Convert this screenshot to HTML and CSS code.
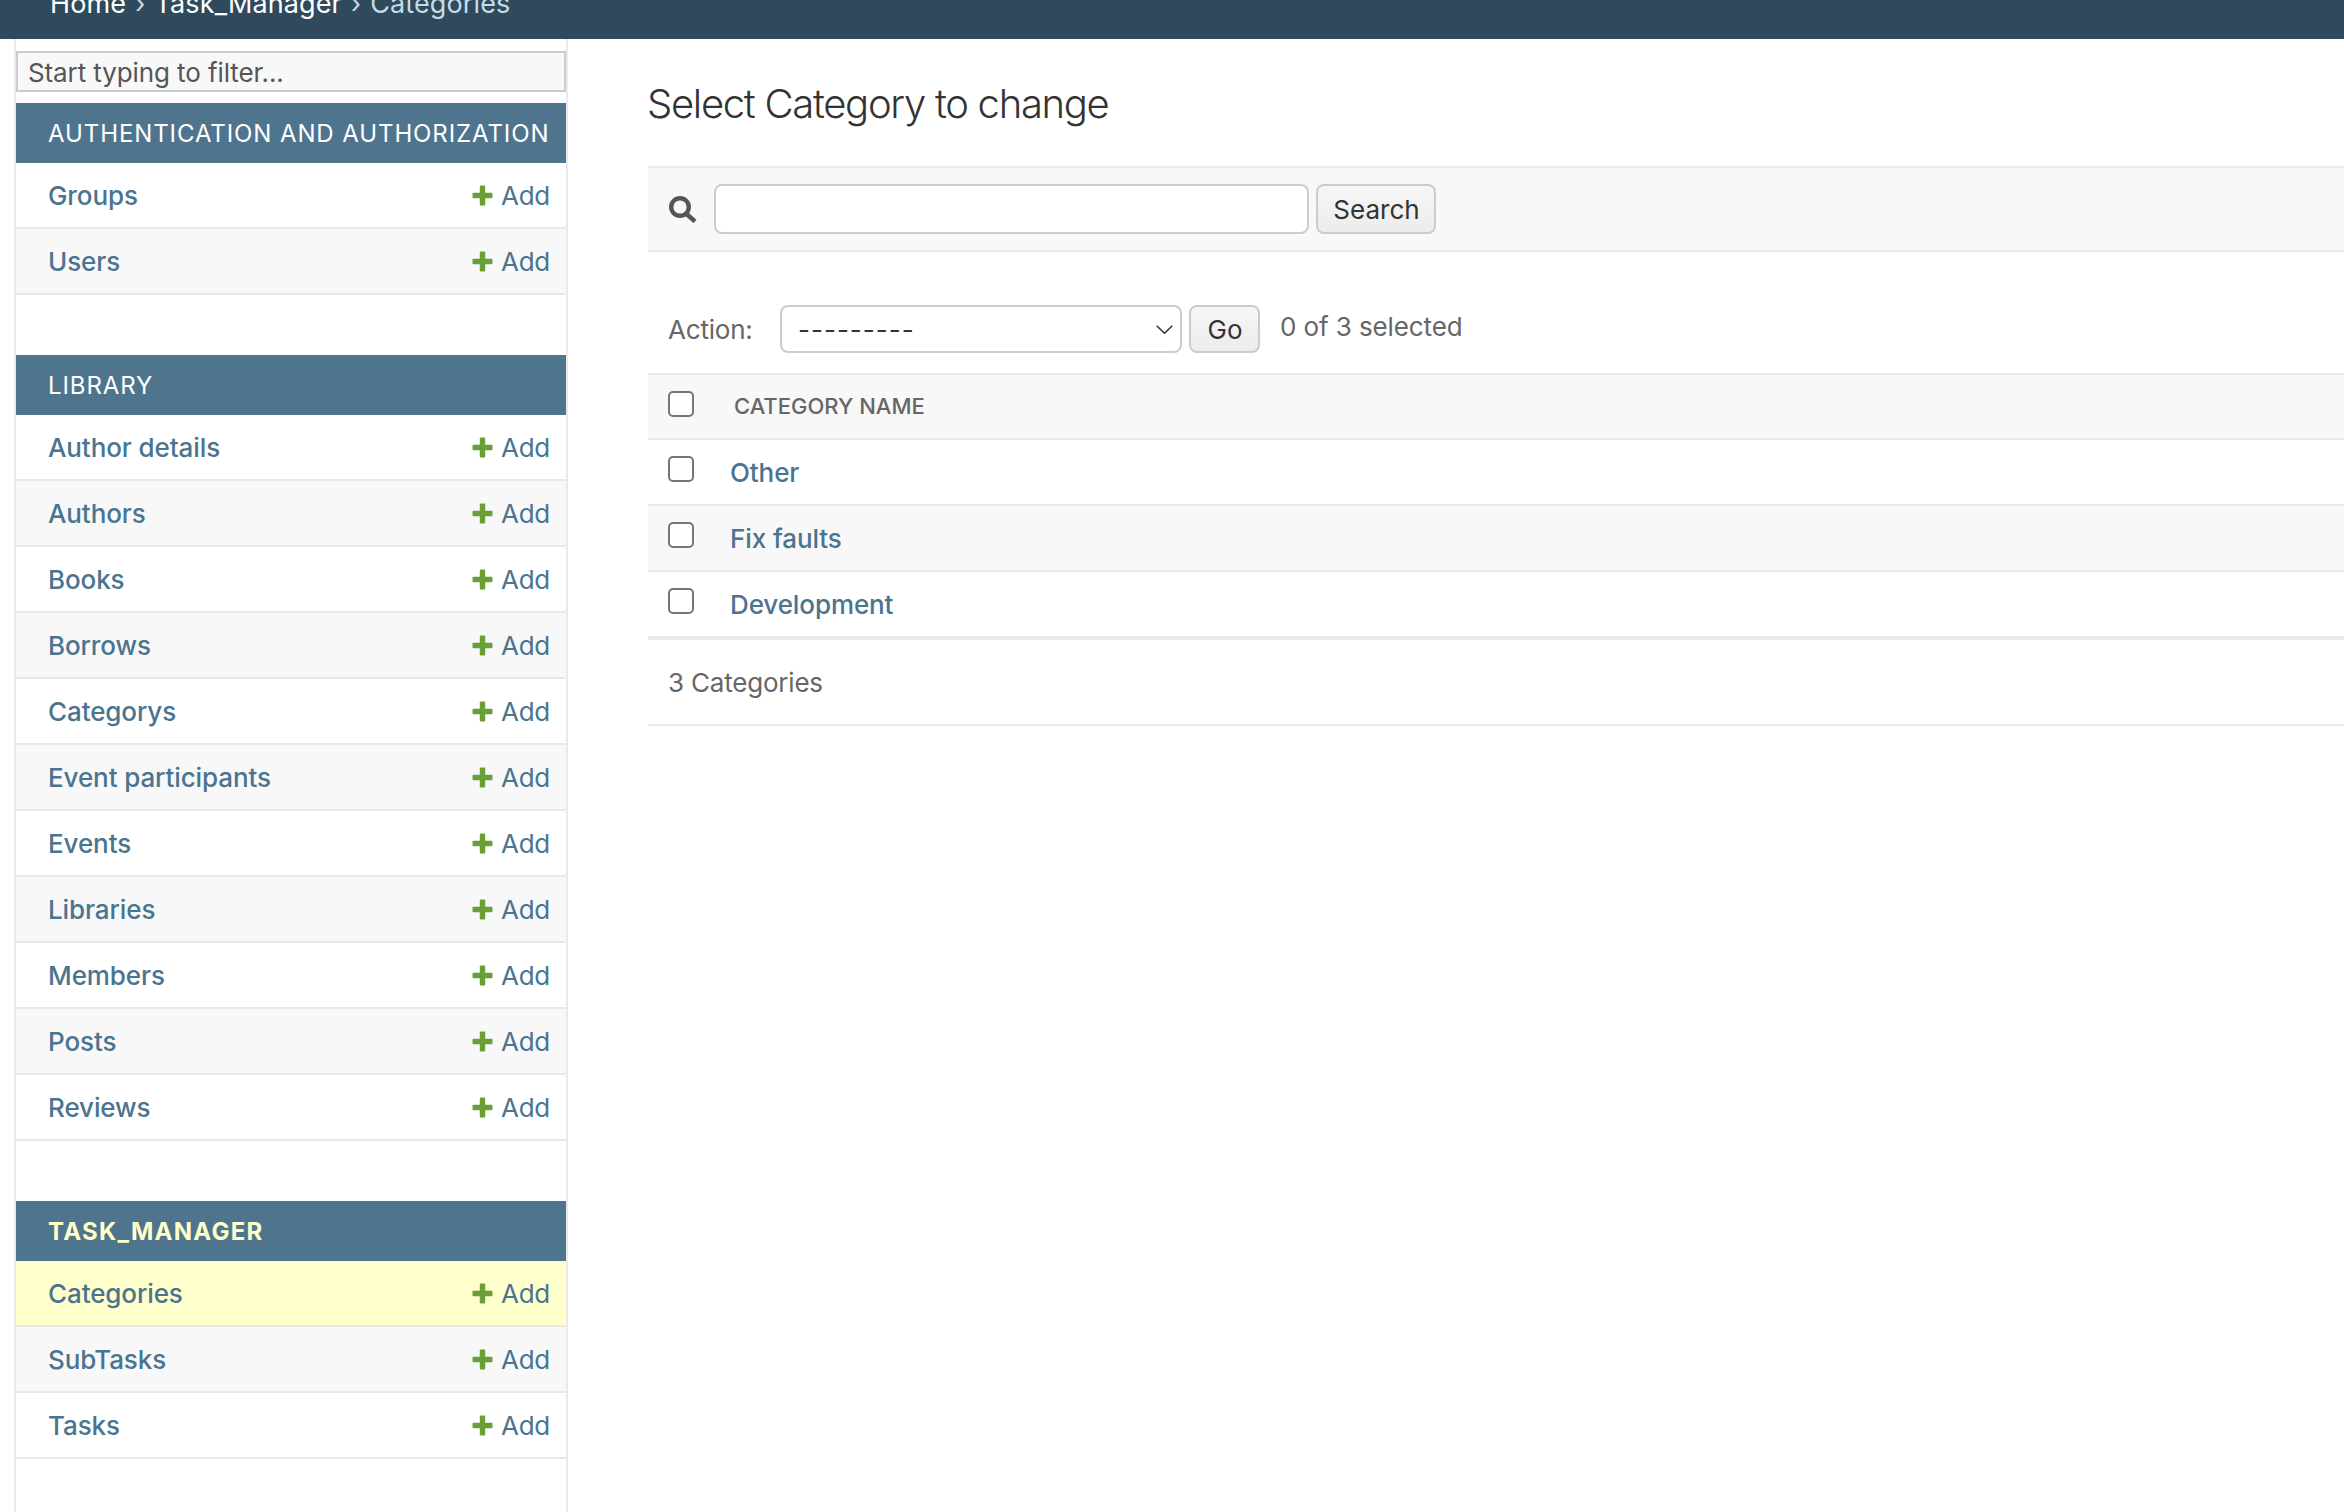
FILE: index.html
```html
<!DOCTYPE html>
<html lang="en">
<head>
<meta charset="utf-8">
<title>Select Category to change</title>
<link rel="stylesheet" href="styles.css">
</head>
<body>
<svg class="defs" aria-hidden="true"><symbol id="plus" viewBox="0 0 21 21"><path d="M7.800 1.500a1 1 0 0 1 1-1h3.400a1 1 0 0 1 1 1v6.300h6.300a1 1 0 0 1 1 1v3.400a1 1 0 0 1-1 1h-6.300v6.300a1 1 0 0 1-1 1H8.800a1 1 0 0 1-1-1v-6.300H1.500a1 1 0 0 1-1-1V8.800a1 1 0 0 1 1-1h6.300z"/></symbol></svg>
<div class="breadcrumbs"><div class="crumbs"><a>Home</a><span class="sep">›</span><a>Task_Manager</a><span class="sep">›</span><span class="current">Categories</span></div></div>
<div class="layout">
  <span class="toggle">‹</span>
  <nav class="sidebar">
    <input class="filter" type="text" placeholder="Start typing to filter...">
    <section class="module">
      <h2 class="caption">AUTHENTICATION AND AUTHORIZATION</h2>
      <div class="row"><a class="name">Groups</a><a class="add"><svg class="plus"><use href="#plus"/></svg>Add</a></div>
      <div class="row"><a class="name">Users</a><a class="add"><svg class="plus"><use href="#plus"/></svg>Add</a></div>
    </section>
    <section class="module">
      <h2 class="caption">LIBRARY</h2>
      <div class="row"><a class="name">Author details</a><a class="add"><svg class="plus"><use href="#plus"/></svg>Add</a></div>
      <div class="row"><a class="name">Authors</a><a class="add"><svg class="plus"><use href="#plus"/></svg>Add</a></div>
      <div class="row"><a class="name">Books</a><a class="add"><svg class="plus"><use href="#plus"/></svg>Add</a></div>
      <div class="row"><a class="name">Borrows</a><a class="add"><svg class="plus"><use href="#plus"/></svg>Add</a></div>
      <div class="row"><a class="name">Categorys</a><a class="add"><svg class="plus"><use href="#plus"/></svg>Add</a></div>
      <div class="row"><a class="name">Event participants</a><a class="add"><svg class="plus"><use href="#plus"/></svg>Add</a></div>
      <div class="row"><a class="name">Events</a><a class="add"><svg class="plus"><use href="#plus"/></svg>Add</a></div>
      <div class="row"><a class="name">Libraries</a><a class="add"><svg class="plus"><use href="#plus"/></svg>Add</a></div>
      <div class="row"><a class="name">Members</a><a class="add"><svg class="plus"><use href="#plus"/></svg>Add</a></div>
      <div class="row"><a class="name">Posts</a><a class="add"><svg class="plus"><use href="#plus"/></svg>Add</a></div>
      <div class="row"><a class="name">Reviews</a><a class="add"><svg class="plus"><use href="#plus"/></svg>Add</a></div>
    </section>
    <section class="module">
      <h2 class="caption caption-current">TASK_MANAGER</h2>
      <div class="row row-current"><a class="name">Categories</a><a class="add"><svg class="plus"><use href="#plus"/></svg>Add</a></div>
      <div class="row"><a class="name">SubTasks</a><a class="add"><svg class="plus"><use href="#plus"/></svg>Add</a></div>
      <div class="row"><a class="name">Tasks</a><a class="add"><svg class="plus"><use href="#plus"/></svg>Add</a></div>
    </section>
  </nav>
  <main class="content">
    <h1 class="title">Select Category to change</h1>
    <div class="searchbar">
      <svg class="search-icon" viewBox="0 0 29 27"><circle cx="11" cy="11" r="8.800"/><path d="M17 17.500l9 8"/></svg>
      <input class="search-input" type="text">
      <button class="btn btn-search">Search</button>
    </div>
    <div class="actions">
      <span class="action-label">Action:</span>
      <div class="select"><span class="dashes">---------</span><svg class="chevron" viewBox="0 0 17 9"><path d="M.7.700l7.800 7.600L16.300.700"/></svg></div>
      <button class="btn btn-go">Go</button>
      <span class="counter">0 of 3 selected</span>
    </div>
    <div class="thead"><span class="check"></span><span class="th">CATEGORY NAME</span></div>
    <div class="trow"><span class="check"></span><a class="cell">Other</a></div>
    <div class="trow trow-alt"><span class="check"></span><a class="cell">Fix faults</a></div>
    <div class="trow trow-last"><span class="check"></span><a class="cell">Development</a></div>
    <p class="paginator">3 Categories</p>
  </main>
</div>
</body>
</html>
```
FILE: styles.css
```css
html, body { margin: 0; padding: 0; height: 100%; overflow: hidden; background: #fff; }
body { font-family: Inter, "Noto Sans", sans-serif; color: #333; }
.defs { position: absolute; width: 0; height: 0; }
.breadcrumbs { height: 39px; background: #304a5d; overflow: hidden; padding-left: 50px; box-sizing: border-box; }
.crumbs { margin-top: -12px; height: 32px; line-height: 32px; font-size: 27px; letter-spacing: .1px; color: #fff; display: flex; }
.crumbs .sep { margin: 0 9px; color: #c5d6e2; }
.crumbs .current { color: #c4dce8; }
.layout { position: relative; display: flex; align-items: stretch; height: 1473px; padding-left: 14px; }
.toggle { position: absolute; left: -10px; top: 864px; font-size: 26px; line-height: 32px; color: #8fb4cc; }
.sidebar { width: 550px; flex: none; border-left: 2px solid #eaeaea; border-right: 2px solid #eaeaea; padding-top: 12px; }
.filter { display: block; width: 100%; height: 41px; box-sizing: border-box; border: 2px solid #ccc; background: #f8f8f8; padding: 2px 10px 0; margin: 0 0 11px; font: 26px Inter, sans-serif; letter-spacing: -.1px; color: #555; outline: 0; }
.filter::placeholder { color: #555; opacity: 1; }
.module { margin-bottom: 60px; }
.caption { margin: 0; height: 60px; line-height: 62px; background: #4f748d; color: #fff; font-size: 24px; font-weight: 400; letter-spacing: .9px; padding-left: 32px; }
.caption-current { color: #ffffc8; font-weight: 700; letter-spacing: 1.25px; }
.row { height: 66px; box-sizing: border-box; border-bottom: 2px solid #e8e8e8; display: flex; align-items: center; justify-content: space-between; padding: 0 16px 0 32px; font-size: 26px; }
.row:nth-of-type(odd) { background: #fff; }
.row:nth-of-type(even) { background: #f8f8f8; }
.row-current:nth-of-type(odd) { background: #ffc; }
.name { color: #4a7490; font-weight: 500; letter-spacing: -.1px; }
.add { display: flex; align-items: center; color: #4a7490; letter-spacing: -.3px; }
.plus { width: 21px; height: 21px; margin-right: 8px; fill: #6a9f35; }
.content { flex: 1; padding: 0 0 0 80px; min-width: 0; }
.title { margin: 0 0 0 -1px; height: 127px; line-height: 129px; font-size: 40px; font-weight: 300; letter-spacing: -1.3px; color: #333; }
.searchbar { height: 86px; box-sizing: border-box; background: #f8f8f8; border-top: 2px solid #eaeaea; border-bottom: 2px solid #eaeaea; display: flex; align-items: center; padding-left: 21px; }
.search-icon { width: 29px; height: 27px; fill: none; stroke: #555; stroke-width: 4.400; margin-right: 16px; }
.search-input { width: 595px; height: 50px; box-sizing: border-box; border: 2px solid #ccc; border-radius: 8px; background: #fff; outline: 0; margin: 0 7px 0 0; padding: 0; }
.btn { box-sizing: border-box; border: 2px solid #ccc; border-radius: 8px; background: linear-gradient(#f6f6f6, #ececec); color: #333; font: 26px Inter, sans-serif; padding: 0 0 0 1px; }
.btn-search { width: 120px; height: 50px; }
.actions { display: flex; align-items: center; height: 121px; box-sizing: border-box; padding: 33px 0 0 20px; font-size: 26px; }
.action-label { width: 112px; color: #666; letter-spacing: -.2px; }
.select { width: 402px; height: 48px; box-sizing: border-box; border: 2px solid #ccc; border-radius: 8px; display: flex; align-items: center; justify-content: space-between; padding: 0 7px 0 16px; margin-right: 7px; color: #333; }
.dashes { letter-spacing: 1px; }
.chevron { width: 17px; height: 9px; fill: none; stroke: #333; stroke-width: 1.500; }
.btn-go { width: 71px; height: 48px; margin-right: 20px; }
.counter { color: #666; position: relative; top: -3px; letter-spacing: -.1px; }
.thead { height: 67px; box-sizing: border-box; background: #f8f8f8; border-top: 2px solid #eaeaea; border-bottom: 2px solid #eaeaea; display: flex; align-items: center; padding-left: 20px; }
.check { width: 26px; height: 26px; box-sizing: border-box; border: 2px solid #767676; border-radius: 5px; background: #fff; flex: none; position: relative; top: -3px; }
.th { margin-left: 40px; margin-top: -2px; font-size: 22px; font-weight: 500; color: #666; }
.trow { height: 66px; box-sizing: border-box; border-bottom: 2px solid #eaeaea; display: flex; align-items: center; padding-left: 20px; }
.trow .check { top: -3px; }
.trow-alt { background: #f8f8f8; }
.trow-last { height: 68px; border-bottom-width: 4px; }
.cell { margin-left: 36px; font-size: 26px; font-weight: 500; letter-spacing: -.1px; color: #4a7490; }
.paginator { margin: 0; height: 86px; line-height: 86px; box-sizing: border-box; border-bottom: 2px solid #eaeaea; padding-left: 20px; font-size: 26px; letter-spacing: -.2px; color: #666; }
```
